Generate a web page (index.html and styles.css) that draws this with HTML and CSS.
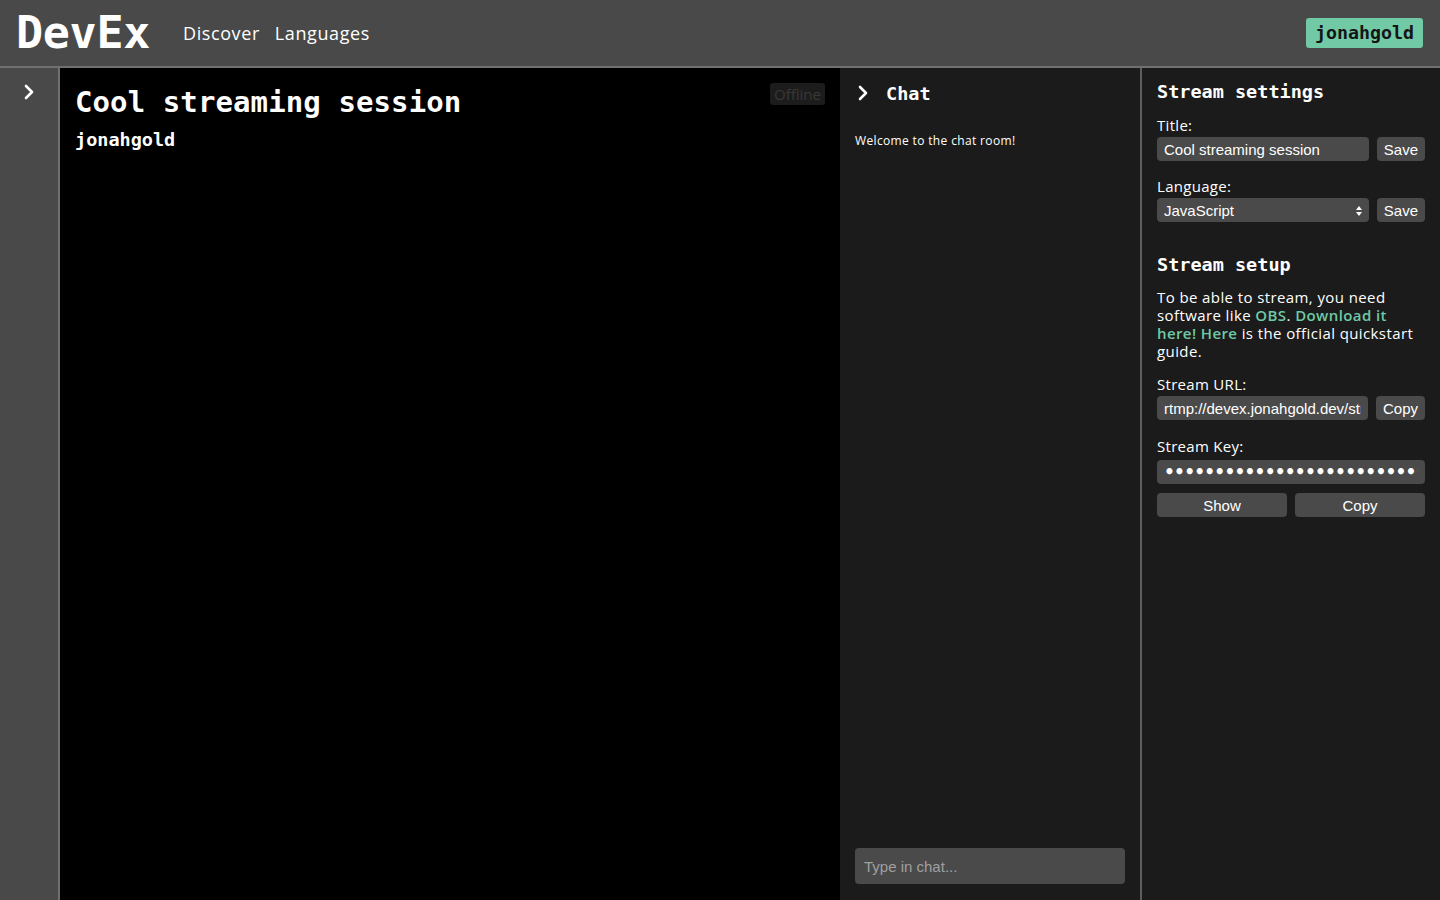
FILE: index.html
```html
<!DOCTYPE html>
<html lang="en">
<head>
<meta charset="utf-8">
<title>DevEx</title>
<link rel="stylesheet" href="styles.css">
</head>
<body>
<header class="topbar">
  <div class="brand">DevEx</div>
  <nav class="nav">
    <a href="#">Discover</a>
    <a href="#">Languages</a>
  </nav>
  <div class="spacer"></div>
  <a class="user-badge" href="#">jonahgold</a>
</header>
<main class="layout">
  <aside class="side">
    <svg class="chev" width="12" height="16" viewBox="0 0 12 16"><path d="M3 2 L9 8 L3 14" fill="none" stroke="#fff" stroke-width="2.6" stroke-linecap="round" stroke-linejoin="round"/></svg>
  </aside>
  <section class="video">
    <div class="video-head">
      <div>
        <h1 class="stream-title">Cool streaming session</h1>
        <div class="streamer">jonahgold</div>
      </div>
      <span class="status">Offline</span>
    </div>
  </section>
  <section class="chat">
    <div class="chat-head">
      <svg class="chev" width="12" height="16" viewBox="0 0 12 16"><path d="M3 2 L9 8 L3 14" fill="none" stroke="#fff" stroke-width="2.6" stroke-linecap="round" stroke-linejoin="round"/></svg>
      <h2 class="chat-title">Chat</h2>
    </div>
    <div class="messages">
      <p class="msg">Welcome to the chat room!</p>
    </div>
    <input class="chat-input" type="text" placeholder="Type in chat...">
  </section>
  <section class="settings">
    <h2 class="panel-title">Stream settings</h2>
    <label class="lbl first">Title:</label>
    <div class="row">
      <input class="field" type="text" value="Cool streaming session">
      <button class="btn">Save</button>
    </div>
    <label class="lbl lbl-gap">Language:</label>
    <div class="row">
      <div class="select-wrap">
        <select class="field sel"><option>JavaScript</option></select>
        <svg class="sel-arrow" width="6" height="10" viewBox="0 0 6 10"><path d="M3 0 L6 4 L0 4 Z M3 10 L6 6 L0 6 Z" fill="#fff"/></svg>
      </div>
      <button class="btn">Save</button>
    </div>
    <h2 class="panel-title setup-title">Stream setup</h2>
    <p class="para">To be able to stream, you need software like <a href="#">OBS</a>. <a href="#">Download it here!</a> <a href="#">Here</a> is the official quickstart guide.</p>
    <label class="lbl">Stream URL:</label>
    <div class="row">
      <input class="field" type="text" value="rtmp://devex.jonahgold.dev/stream">
      <button class="btn">Copy</button>
    </div>
    <label class="lbl lbl-gap key-lbl">Stream Key:</label>
    <input class="field full key" type="password" value="abcdefghijklmnopqrstuvwxyz0123456789">
    <div class="row two">
      <button class="btn wide">Show</button>
      <button class="btn wide">Copy</button>
    </div>
  </section>
</main>
</body>
</html>
```
FILE: styles.css
```css
* { box-sizing: border-box; }
html, body { margin: 0; height: 100%; }
body {
  background: #1b1b1b;
  color: #fff;
  font-family: "Open Sans", "Inter", sans-serif;
  overflow: hidden;
}
a { text-decoration: none; color: inherit; }

.topbar {
  height: 68px;
  background: #494949;
  border-bottom: 2px solid #707070;
  display: flex;
  align-items: center;
  padding: 0 17px 0 16px;
}
.brand {
  font-family: "DejaVu Sans Mono", monospace;
  font-weight: bold;
  font-size: 45px;
  letter-spacing: -0.3px;
  color: #fff;
  margin-top: -2px;
}
.nav { display: flex; gap: 15px; margin-left: 33px; }
.nav a { font-size: 18px; font-weight: 500; letter-spacing: 0.6px; color: #fff; }
.spacer { flex: 1; }
.user-badge {
  background: #71c9a6;
  color: #151515;
  font-family: "DejaVu Sans Mono", monospace;
  font-weight: bold;
  font-size: 18.3px;
  padding: 4px 9px 5px 9px;
  border-radius: 3px;
  margin-top: -1px;
}

.layout {
  display: flex;
  height: calc(100vh - 68px);
}
.side {
  flex: none;
  width: 60px;
  background: #494949;
  border-right: 2px solid #707070;
  display: flex;
  justify-content: center;
  padding-top: 16px;
  padding-right: 1px;
}
.side .chev { display: block; }
.video {
  flex: none;
  width: 780px;
  background: #000;
  padding: 14px 15px 0 15px;
}
.video-head { display: flex; justify-content: space-between; align-items: flex-start; }
.stream-title {
  margin: 0;
  font-family: "DejaVu Sans Mono", monospace;
  font-weight: bold;
  font-size: 29px;
  line-height: 40px;
  letter-spacing: 0.1px;
}
.streamer {
  font-family: "DejaVu Sans Mono", monospace;
  font-weight: bold;
  font-size: 18.5px;
  margin-top: 7px;
}
.status {
  background: #1c1c1c;
  color: #383838;
  font-size: 15px;
  padding: 0 4px;
  line-height: 22px;
  border-radius: 3px;
  margin-top: 1px;
}

.chat {
  flex: none;
  width: 302px;
  background: #1b1b1b;
  border-right: 2px solid #5e5e5e;
  display: flex;
  flex-direction: column;
  padding: 0 15px 16px 15px;
}
.chat-head { display: flex; align-items: center; gap: 17px; height: 50px; padding-left: 2px; }
.chat-title {
  margin: 0;
  font-family: "DejaVu Sans Mono", monospace;
  font-weight: bold;
  font-size: 18.5px;
}
.messages { flex: 1; padding-top: 14px; }
.msg { margin: 0; font-size: 12px; font-weight: 500; letter-spacing: 0.35px; }
.chat-input {
  height: 36px;
  background: #4a4a4a;
  border: none;
  border-radius: 4px;
  color: #fff;
  font-family: "Liberation Sans", Arial, sans-serif;
  font-size: 15px;
  padding: 0 9px;
  outline: none;
}
.chat-input::placeholder { color: #a0a0a0; }

.settings {
  flex: 1;
  min-width: 0;
  background: #1b1b1b;
  padding: 14px 15px 0 15px;
  display: flex;
  flex-direction: column;
}
.panel-title {
  margin: 0;
  font-family: "DejaVu Sans Mono", monospace;
  font-weight: bold;
  font-size: 18.5px;
  line-height: 20px;
}
.setup-title { margin-top: 33px; }
.lbl { font-size: 15px; letter-spacing: 0.3px; line-height: 18px; margin-top: 15px; margin-bottom: 3px; }
.first { margin-top: 14px; }
.lbl-gap { margin-top: 16px; }
.key-lbl { margin-top: 17px; margin-bottom: 5px; }
.row { display: flex; gap: 8px; align-items: center; }
.field {
  flex: 1;
  min-width: 0;
  height: 24px;
  background: #4a4a4a;
  border: none;
  border-radius: 4px;
  color: #fff;
  font-family: "Liberation Sans", Arial, sans-serif;
  font-size: 15px;
  padding: 0 7px;
  outline: none;
}
.full { flex: none; width: 100%; }
.key { font-family: "DejaVu Sans", sans-serif; font-weight: bold; font-size: 17px; letter-spacing: -0.8px; }
.select-wrap { flex: 1; position: relative; display: flex; }
.sel { appearance: none; -webkit-appearance: none; width: 100%; }
.sel-arrow { position: absolute; right: 7px; top: 8px; }
.btn {
  height: 24px;
  background: #4a4a4a;
  border: none;
  border-radius: 4px;
  color: #fff;
  font-family: "Liberation Sans", Arial, sans-serif;
  font-size: 15px;
  padding: 0 7px;
}
.two { margin-top: 9px; }
.wide { flex: 1; }
.para {
  margin: 13px 0 0 0;
  font-size: 15px;
  letter-spacing: 0.4px;
  line-height: 18px;
}
.para a { color: #6fc9a6; font-weight: 600; }
```
